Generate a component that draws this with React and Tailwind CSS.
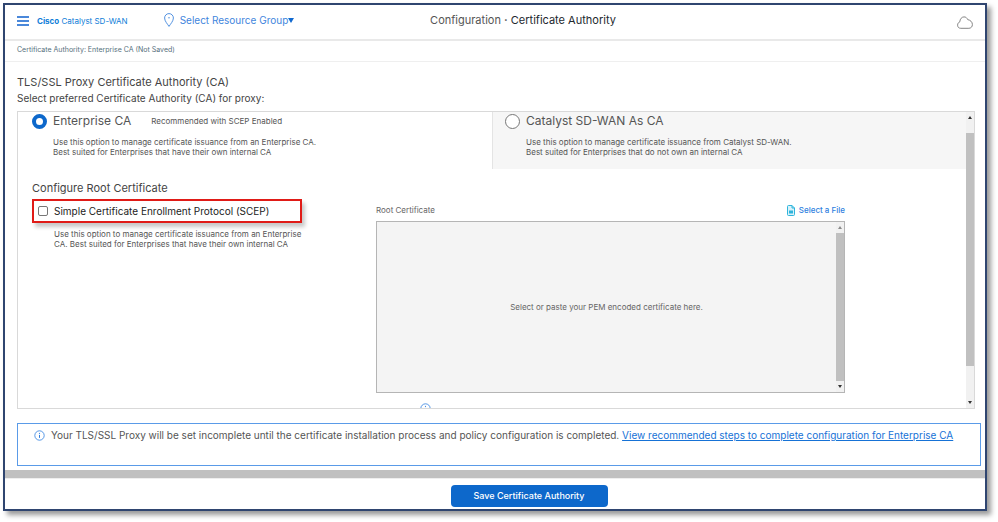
import React from 'react';
import clsx from 'clsx';

const options = [
  {
    id: 'enterprise',
    title: 'Enterprise CA',
    note: 'Recommended with SCEP Enabled',
    lines: [
      'Use this option to manage certificate issuance from an Enterprise CA.',
      'Best suited for Enterprises that have their own internal CA',
    ],
  },
  {
    id: 'sdwan',
    title: 'Catalyst SD-WAN As CA',
    lines: [
      'Use this option to manage certificate issuance from Catalyst SD-WAN.',
      'Best suited for Enterprises that do not own an internal CA',
    ],
  },
];

function PinIcon() {
  return (
    <svg width="10" height="14" viewBox="0 0 10 14" fill="none" stroke="#3f86dd" strokeWidth="0.9">
      <path d="M5 13.4C3.6 11.2.6 8 .6 5A4.4 4.4 0 0 1 9.4 5C9.4 8 6.4 11.2 5 13.4Z" />
      <circle cx="5" cy="4.8" r="0.7" fill="#3f86dd" stroke="none" />
    </svg>
  );
}

function CloudIcon() {
  return (
    <svg width="16" height="13" viewBox="0 0 16 13" fill="none" stroke="#777" strokeWidth="0.9">
      <path d="M3.8 12.3C1.800 12.300.6 11 .6 9.200c0-1.600.900-2.900 2.200-3.400C3 3 4.700.9 7 .9c1.900 0 2.900 1 3.700 2.700 2.700.5 4.700 2.400 4.700 4.900 0 2.300-1.500 3.800-3.500 3.800Z" />
    </svg>
  );
}

function FileIcon() {
  return (
    <svg width="8" height="11" viewBox="0 0 8 11" fill="none" stroke="#2fb5dc" strokeWidth="1">
      <path d="M.5 1.5a1 1 0 0 1 1-1H5L7.5 3v6.5a1 1 0 0 1-1 1h-5a1 1 0 0 1-1-1Z" fill="#d9f2fa" />
      <path d="M5 .5V3h2.5" />
      <path d="M2 5.500h4v3H2Z" fill="#2fb5dc" stroke="none" />
    </svg>
  );
}

function InfoIcon() {
  return (
    <svg width="11" height="11" viewBox="0 0 11 11" fill="none" stroke="#2f7fe0" strokeWidth="0.8" className="shrink-0">
      <circle cx="5.5" cy="5.5" r="4.7" />
      <path d="M5.5 4.9v3" strokeWidth="1" />
      <circle cx="5.5" cy="3.3" r="0.6" fill="#2f7fe0" stroke="none" />
    </svg>
  );
}

function Arrow({ down, muted }) {
  return (
    <svg width="4" height="3" viewBox="0 0 4 3" fill={muted ? '#8a8a8a' : '#333'}>
      <path d={down ? 'M0 0h4L2 3Z' : 'M0 3h4L2 0Z'} />
    </svg>
  );
}

// Always-visible scroll track, drawn beside the scrolled content.
function ScrollTrack({ thumb, muted }) {
  return (
    <div aria-hidden="true" className="flex w-2 shrink-0 flex-col items-center bg-[#f1f1f1] py-1">
      <Arrow muted={muted} />
      <div className="flex w-full flex-1 flex-col py-1">
        <div className={clsx('w-full bg-[#c0c0c0]', thumb)} />
      </div>
      <Arrow down />
    </div>
  );
}

function Header() {
  return (
    <header className="grid h-9 shrink-0 grid-cols-[1fr_auto_1fr] items-center border-b-2 border-[#e9e9e9] px-3">
      <div className="flex items-center pb-1">
        <button type="button" aria-label="Menu" className="flex w-3 flex-col gap-0.5 pt-0.5">
          <span className="h-0.5 bg-[#4a88da]" />
          <span className="h-0.5 bg-[#4a88da]" />
          <span className="h-0.5 bg-[#4a88da]" />
        </button>
        <span className="ml-2 pt-0.5 text-[8px] leading-3 text-[#0d7dd8]">
          <b className="font-bold">Cisco</b> Catalyst SD-WAN
        </span>
        <button type="button" className="ml-9 flex items-center text-[10px] leading-3 text-[#3f86dd]">
          <PinIcon />
          <span className="ml-1.5">Select Resource Group</span>
          <svg width="6" height="5" viewBox="0 0 6 5" fill="#1169d0">
            <path d="M0 0h6L3 5Z" />
          </svg>
        </button>
      </div>
      <div className="pb-1 pl-14 text-[11px] leading-4 text-[#555]">
        Configuration <span className="font-bold">·</span> <span className="text-[#23282e]">Certificate Authority</span>
      </div>
      <button type="button" aria-label="Cloud status" className="justify-self-end">
        <CloudIcon />
      </button>
    </header>
  );
}

function CaOption({ option, selected }) {
  return (
    <label
      className={clsx(
        'flex h-[57px] gap-1.5',
        selected ? 'w-1/2 bg-white pl-3.5' : 'flex-1 border-l border-[#e4e4e4] bg-[#f6f6f6] pl-3'
      )}
    >
      <input
        type="radio"
        name="ca"
        defaultChecked={selected}
        className="mt-0.5 size-[15px] shrink-0 appearance-none rounded-full border border-[#777] bg-white checked:border-4 checked:border-[#0d68cb]"
      />
      <span className="flex flex-col pt-px text-[#555]">
        <span className="flex items-center text-[12px] leading-4">
          {option.title}
          {option.note && <span className="ml-5 text-[8px]">{option.note}</span>}
        </span>
        <span className="mt-2 text-[8px] leading-[10px]">
          {option.lines[0]}
          <br />
          {option.lines[1]}
        </span>
      </span>
    </label>
  );
}

function RootCertificate() {
  return (
    <div className="w-[469px]">
      <div className="flex items-center justify-between leading-3">
        <label htmlFor="pem" className="text-[8px] text-[#666]">
          Root Certificate
        </label>
        <button type="button" className="flex items-center gap-1 text-[8px] font-medium text-[#2f7fe0]">
          <FileIcon />
          Select a File
        </button>
      </div>
      <div className="mt-[5px] flex h-[172px] border border-[#b5b5b5] bg-[#f4f4f4]">
        <textarea
          id="pem"
          placeholder="Select or paste your PEM encoded certificate here."
          className="min-w-0 flex-1 resize-none overflow-hidden pt-[79px] text-center text-[8px] leading-3 outline-none placeholder:text-[#666]"
        />
        <ScrollTrack muted thumb="h-full" />
      </div>
      <div className="mt-2.5 ml-11">
        <InfoIcon />
      </div>
    </div>
  );
}

export default function App() {
  return (
    <div className="h-screen bg-white pt-[3px] pr-[11px] pb-[11px] pl-[3px] font-['Inter',sans-serif]">
      <div className="flex h-full flex-col border-2 border-[#2f4570] bg-white shadow-[4px_4px_5px_rgba(0,0,0,0.4)]">
        <Header />
        <nav className="h-[21px] shrink-0 border-b border-[#efefef] px-3 pt-[3px] text-[7px] leading-3 text-[#56707c]">
          Certificate Authority: Enterprise CA (Not Saved)
        </nav>

        <main className="flex min-h-0 flex-1 flex-col pr-1 pl-3">
          <h1 className="mt-3 text-[11px] leading-4 text-[#444]">TLS/SSL Proxy Certificate Authority (CA)</h1>
          <p className="text-[10px] leading-4 text-[#444]">Select preferred Certificate Authority (CA) for proxy:</p>

          <section className="mt-[5px] mr-1.5 flex min-h-0 flex-1 border border-[#d9d9d9]">
            <div className="min-w-0 flex-1 overflow-hidden">
              <div className="flex">
                {options.map((option, i) => (
                  <CaOption key={option.id} option={option} selected={i === 0} />
                ))}
              </div>
              <div className="flex justify-between pt-[11px] pr-[121px] pl-3.5">
                <div>
                  <h2 className="text-[11px] leading-4 text-[#444]">Configure Root Certificate</h2>
                  <label className="mt-[3px] flex h-6 w-[270px] items-center gap-1.5 border-2 border-[#e01b17] px-1 text-[10px] text-[#222] shadow-[3px_4px_4px_rgba(0,0,0,0.22)]">
                    <input type="checkbox" className="size-2.5 appearance-none rounded-xs border border-[#777] bg-white checked:bg-[#0d68cb]" />
                    Simple Certificate Enrollment Protocol (SCEP)
                  </label>
                  <p className="mt-1.5 ml-[22px] text-[8px] leading-[10px] text-[#555]">
                    Use this option to manage certificate issuance from an Enterprise
                    <br />
                    CA. Best suited for Enterprises that have their own internal CA
                  </p>
                </div>
                <div className="pt-6">
                  <RootCertificate />
                </div>
              </div>
            </div>
            <ScrollTrack thumb="mt-2.5 h-[85%]" />
          </section>

          <div className="mt-3.5 mb-1 flex h-[43px] shrink-0 items-start gap-1.5 border border-[#5a9be8] px-4 pt-[3px] text-[10px] leading-4 text-[#555]">
            <span className="flex h-4 items-center">
              <InfoIcon />
            </span>
            <p>
              Your TLS/SSL Proxy will be set incomplete until the certificate installation process and policy configuration is completed.{' '}
              <a href="#steps" className="text-[#1672d6] underline">
                View recommended steps to complete configuration for Enterprise CA
              </a>
            </p>
          </div>
        </main>

        <div className="h-2 shrink-0 bg-[#c0c0c0]" />
        <footer className="flex h-[31px] shrink-0 items-center justify-center border-t border-[#eee] pt-[3px] pl-[68px]">
          <button type="button" className="h-[22px] w-[157px] rounded bg-[#0d68cb] text-[9px] font-medium text-white">
            Save Certificate Authority
          </button>
        </footer>
      </div>
    </div>
  );
}
